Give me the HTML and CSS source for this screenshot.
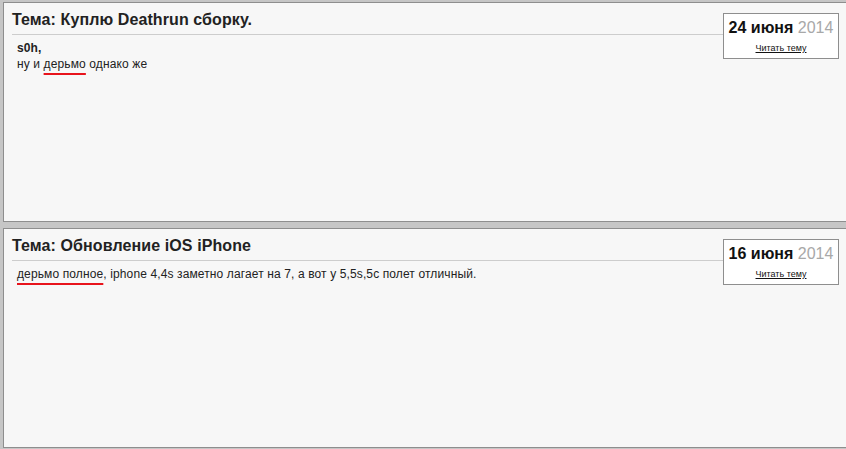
FILE: index.html
```html
<!DOCTYPE html>
<html lang="ru">
<head>
<meta charset="utf-8">
<link rel="stylesheet" href="styles.css">
</head>
<body>
<div class="list">
  <div class="card">
    <div class="main">
      <h2 class="title">Тема: Куплю Deathrun сборку.</h2>
      <div class="post">
        <div class="author">s0h,</div>
        <div>ну и <span class="mark">дерьмо</span> однако же</div>
      </div>
    </div>
    <div class="date">
      <div class="day"><b>24 июня</b> <span class="year">2014</span></div>
      <a class="read" href="#">Читать тему</a>
    </div>
  </div>
  <div class="card">
    <div class="main">
      <h2 class="title">Тема: Обновление iOS iPhone</h2>
      <div class="post">
        <div><span class="mark">дерьмо полное</span>, iphone 4,4s заметно лагает на 7, а вот у 5,5s,5c полет отличный.</div>
      </div>
    </div>
    <div class="date">
      <div class="day"><b>16 июня</b> <span class="year">2014</span></div>
      <a class="read" href="#">Читать тему</a>
    </div>
  </div>
</div>
</body>
</html>
```
FILE: styles.css
```css
html, body {
  margin: 0;
  padding: 0;
  background: #c6c6c6;
  overflow: hidden;
}
body {
  font-family: "Liberation Sans", Arial, sans-serif;
  color: #222;
}
.list {
  padding: 2px 0 0 3px;
}
.card {
  box-sizing: border-box;
  height: 220px;
  margin-bottom: 6px;
  background: #f7f7f7;
  border: 1px solid #8e8e8e;
  border-right: none;
  padding: 8px 7px 0 8px;
  display: grid;
  grid-template-columns: 1fr 116px;
  align-items: start;
}
.title {
  margin: 0;
  font-size: 16px;
  font-weight: bold;
  line-height: 18px;
  letter-spacing: 0.1px;
  color: #222;
  padding-bottom: 5px;
  border-bottom: 1px solid #cdcdcd;
}
.post {
  padding: 5px 5px 0 5px;
  font-size: 12px;
  line-height: 16px;
  letter-spacing: 0.12px;
  color: #222;
}
.author {
  font-weight: bold;
}
.mark {
  text-decoration: underline #e8141c 2px;
  text-underline-offset: 5px;
  text-decoration-skip-ink: none;
}
.date {
  box-sizing: border-box;
  height: 46px;
  margin-top: 2px;
  background: #fff;
  border: 1px solid #8e8e8e;
  text-align: center;
  padding-top: 4px;
}
.day {
  font-size: 16px;
  line-height: 19px;
  color: #111;
}
.year {
  color: #a8a8a8;
}
.read {
  display: inline-block;
  margin-top: 3px;
  font-size: 9px;
  color: #111;
  text-decoration: underline;
}
```
